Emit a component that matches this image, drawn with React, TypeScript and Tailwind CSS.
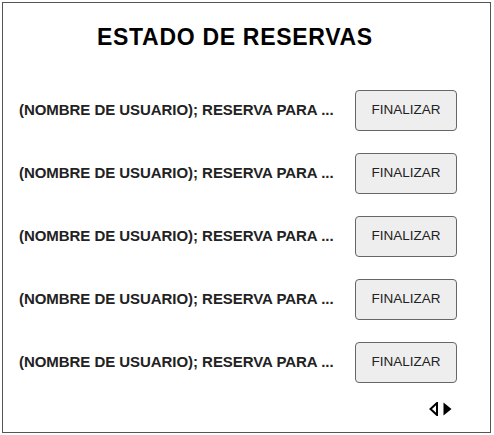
const rows = [1, 2, 3, 4, 5];

export default function App() {
  return (
    <div className="w-[494px] h-[435px] bg-white pt-[2px] pl-[2px]" style={{ fontFamily: '"Liberation Sans", Arial, sans-serif' }}>
      <div className="w-[489px] h-[431px] border border-[#555] flex flex-col">
        {/* Title */}
        <h1 className="pt-[21px] pl-[94px] text-[23px] leading-[26px] font-bold tracking-[0.7px] text-black">
          ESTADO DE RESERVAS
        </h1>

        {/* Reservas */}
        <div className="mt-[40px] flex flex-col gap-[22px] pl-[16px] pr-[33px]">
          {rows.map((r) => (
            <div key={r} className="flex items-center justify-between h-[41px]">
              <span className="text-[15px] font-bold text-[#222] tracking-[-0.05px]">
                (NOMBRE DE USUARIO); RESERVA PARA ...
              </span>
              <button className="w-[102px] h-[41px] bg-[#eeeeee] border border-[#666] rounded-[4px] text-[13.5px] text-[#222]">
                FINALIZAR
              </button>
            </div>
          ))}
        </div>

        {/* Paginacion */}
        <div className="mt-[19px] flex justify-end pr-[38px] gap-[5px]">
          <svg width="9" height="14" viewBox="0 0 9 14">
            <polygon points="8,1 1.5,7 8,13" fill="none" stroke="#000" strokeWidth="2" />
          </svg>
          <svg width="9" height="14" viewBox="0 0 9 14">
            <polygon points="0.5,0.5 8.5,7 0.5,13.5" fill="#000" />
          </svg>
        </div>
      </div>
    </div>
  );
}
